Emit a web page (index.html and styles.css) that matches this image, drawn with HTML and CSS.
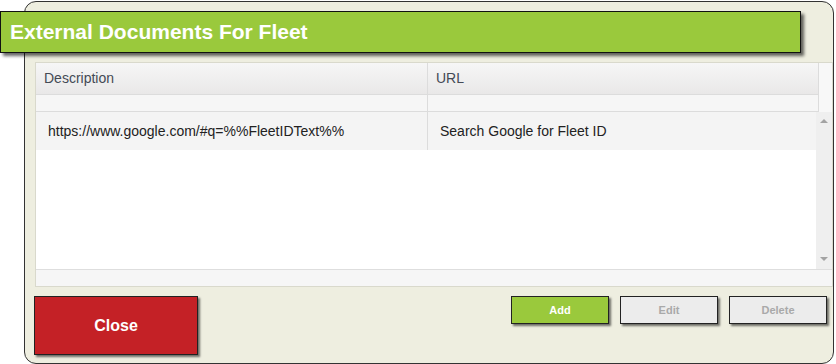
FILE: index.html
```html
<!DOCTYPE html>
<html lang="en">
<head>
    <meta charset="UTF-8">
    <title>External Documents For Fleet</title>
    <link rel="stylesheet" href="styles.css">
</head>
<body>
    <div class="dialog">
        <div class="dialog-title">External Documents For Fleet</div>

        <div class="grid">
            <div class="grid-head">
                <div class="head-cell">Description</div>
                <div class="head-cell last">URL</div>
                <div class="head-scroll"></div>
                <div class="filter-cell"></div>
                <div class="filter-cell last"></div>
            </div>
            <div class="grid-body">
                <div class="rows">
                    <div class="row">
                        <div class="cell">https://www.google.com/#q=%%FleetIDText%%</div>
                        <div class="cell last">Search Google for Fleet ID</div>
                    </div>
                </div>
                <div class="scrollbar">
                    <span class="arrow up"></span>
                    <span class="arrow down"></span>
                </div>
            </div>
            <div class="grid-foot"></div>
        </div>

        <div class="actions">
            <button class="btn btn-close">Close</button>
            <div class="action-group">
                <button class="btn btn-small btn-green">Add</button>
                <button class="btn btn-small btn-grey">Edit</button>
                <button class="btn btn-small btn-grey">Delete</button>
            </div>
        </div>
    </div>
</body>
</html>
```

FILE: styles.css
```css
/* Page */
body {
    margin: 0;
    padding: 0;
    background: #ffffff;
    font-family: "Liberation Sans", Arial, sans-serif;
}

/* Dialog panel */
.dialog {
    box-sizing: border-box;
    width: 810px;
    height: 363px;
    margin: 1px 0 0 24px;
    background: #eeeee0;
    border: 1px solid #333333;
    border-radius: 12px;
    display: flex;
    flex-direction: column;
}

/* Title bar */
.dialog-title {
    box-sizing: border-box;
    width: 801px;
    height: 42px;
    margin: 9px 0 0 -25px;
    padding-left: 9px;
    background: #9ac93c;
    border: 1px solid #111111;
    box-shadow: 3px 3px 3px rgba(0, 0, 0, 0.6);
    color: #ffffff;
    font-size: 21px;
    font-weight: bold;
    line-height: 40px;
}

/* Grid */
.grid {
    box-sizing: border-box;
    height: 225px;
    margin: 9px 0 0 10px;
    border: 1px solid #d9d9cc;
    background: #ffffff;
    display: flex;
    flex-direction: column;
}

.grid-head {
    display: grid;
    grid-template-columns: 392px 390px 1fr;
    grid-template-rows: 32px 17px;
}

.head-cell {
    padding-left: 8px;
    background: linear-gradient(#f6f6f6, #e9e8e8);
    border-right: 1px solid #dcdcdc;
    border-bottom: 1px solid #dcdcdc;
    color: #444a55;
    font-size: 14px;
    line-height: 31px;
}

.head-scroll {
    grid-row: span 2;
    background: #f8f8f8;
    border-left: 1px solid #dcdcdc;
}

.filter-cell {
    background: #f6f6f6;
    border-right: 1px solid #dcdcdc;
    border-bottom: 1px solid #dcdcdc;
}

.last {
    border-right: none;
}

.grid-body {
    flex: 1;
    display: flex;
}

.rows {
    flex: 1;
}

.row {
    display: grid;
    grid-template-columns: 392px 1fr;
    height: 38px;
    background: #f4f4f4;
}

.cell {
    padding-left: 12px;
    border-right: 1px solid #dcdcdc;
    color: #222222;
    font-size: 14px;
    line-height: 38px;
}

.cell.last {
    border-right: none;
}

.scrollbar {
    width: 16px;
    background: #efefef;
    display: flex;
    flex-direction: column;
    justify-content: space-between;
    align-items: center;
    padding: 7px 0 8px;
}

.arrow {
    width: 0;
    height: 0;
    border-left: 4px solid transparent;
    border-right: 4px solid transparent;
}

.arrow.up { border-bottom: 4px solid #a3a3a3; }
.arrow.down { border-top: 4px solid #a3a3a3; }

.grid-foot {
    height: 16px;
    background: #f6f6f6;
    border-top: 1px solid #dedede;
}

/* Bottom actions */
.actions {
    display: flex;
    justify-content: space-between;
    align-items: flex-start;
    margin: 9px 6px 0 9px;
}

.action-group {
    display: flex;
    gap: 11px;
}

.btn {
    box-sizing: border-box;
    border: 1px solid #222222;
    box-shadow: 2px 2px 2px rgba(0, 0, 0, 0.55);
    font-family: "Liberation Sans", Arial, sans-serif;
    font-weight: bold;
    padding: 0;
    cursor: pointer;
}

.btn-close {
    width: 164px;
    height: 59px;
    background: #c42126;
    color: #ffffff;
    font-size: 16px;
}

.btn-small {
    width: 98px;
    height: 28px;
    font-size: 11px;
}

.btn-green {
    background: #9ac93c;
    color: #ffffff;
}

.btn-grey {
    background: #ececec;
    color: #a9a9a9;
}
```
